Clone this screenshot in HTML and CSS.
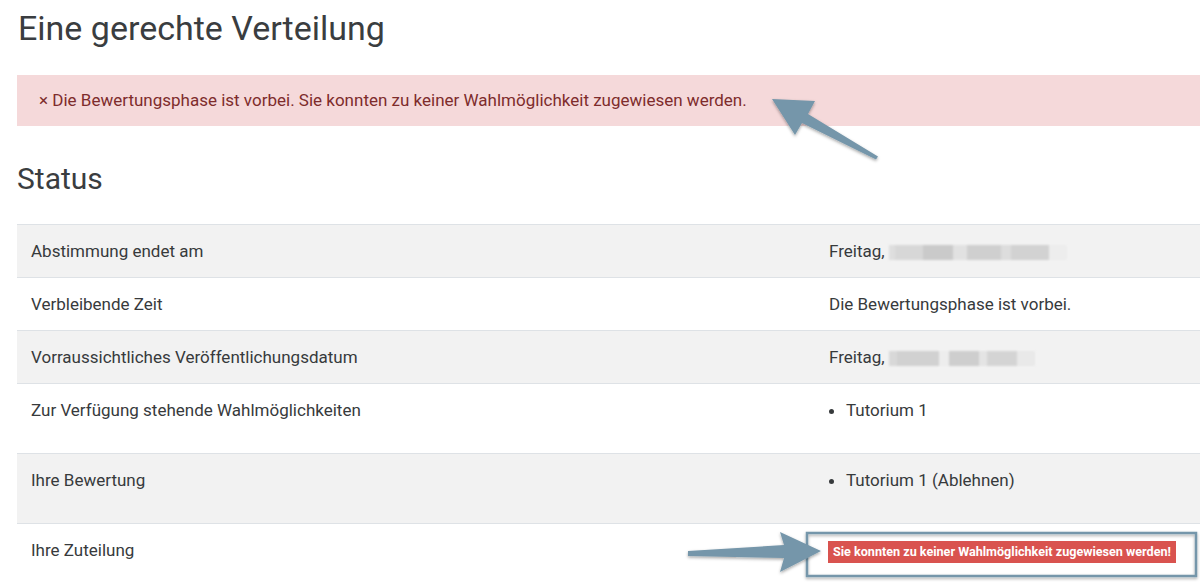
FILE: index.html
```html
<!DOCTYPE html>
<html lang="de">
<head>
<meta charset="utf-8">
<title>Eine gerechte Verteilung</title>
<link rel="stylesheet" href="styles.css">
</head>
<body>
<main class="page">
  <h2 class="title">Eine gerechte Verteilung</h2>
  <div class="alert">× Die Bewertungsphase ist vorbei. Sie konnten zu keiner Wahlmöglichkeit zugewiesen werden.</div>
  <h3 class="section">Status</h3>
  <table class="status">
    <tbody>
      <tr>
        <td class="label">Abstimmung endet am</td>
        <td class="value">Freitag, <span class="blur blur-a"><i></i><i></i><i></i><i></i><i></i><i></i><i></i><i></i></span></td>
      </tr>
      <tr>
        <td class="label">Verbleibende Zeit</td>
        <td class="value">Die Bewertungsphase ist vorbei.</td>
      </tr>
      <tr>
        <td class="label">Vorraussichtliches Veröffentlichungsdatum</td>
        <td class="value">Freitag, <span class="blur blur-b"><i></i><i></i><i></i><i></i><i></i><i></i><i></i></span></td>
      </tr>
      <tr>
        <td class="label">Zur Verfügung stehende Wahlmöglichkeiten</td>
        <td class="value"><ul class="list"><li>Tutorium 1</li></ul></td>
      </tr>
      <tr>
        <td class="label">Ihre Bewertung</td>
        <td class="value"><ul class="list"><li>Tutorium 1 (Ablehnen)</li></ul></td>
      </tr>
      <tr>
        <td class="label">Ihre Zuteilung</td>
        <td class="value"><span class="badge">Sie konnten zu keiner Wahlmöglichkeit zugewiesen werden!</span></td>
      </tr>
    </tbody>
  </table>
</main>
<svg class="annotations" width="1200" height="588" viewBox="0 0 1200 588" xmlns="http://www.w3.org/2000/svg">
  <defs>
    <filter id="sh" x="-20%" y="-20%" width="140%" height="140%">
      <feDropShadow dx="0" dy="1.5" stdDeviation="1.5" flood-color="#000" flood-opacity="0.35"/>
    </filter>
  </defs>
  <rect x="807" y="533" width="389" height="43" fill="none" stroke="#7596aa" stroke-width="2.5" filter="url(#sh)"/>
  <polygon points="772,99 815,101 808,114 878,156.5 876,159.5 802,123 795,135" fill="#7596aa" filter="url(#sh)"/>
  <polygon points="821,551 780,532 784,545 688,551 688,556 784,558 780,572" fill="#7596aa" filter="url(#sh)"/>
</svg>
</body>
</html>
```

FILE: styles.css
```css
html, body {
  margin: 0;
  padding: 0;
  background: #fff;
  overflow: hidden;
}

body {
  font-family: Roboto, "Noto Sans", sans-serif;
  color: #373a3c;
  font-size: 17px;
  line-height: 1.5;
  width: 1200px;
  height: 588px;
  position: relative;
}

.page {
  padding-left: 17px;
  width: 1200px;
}

.title {
  font-weight: 400;
  font-size: 34px;
  line-height: 40px;
  margin: 8px 0 27px 1px;
  color: #3a3d40;
}

.alert {
  background: #f5d9da;
  color: #7e2c2c;
  padding: 13px 22px 13px 22px;
  line-height: 25px;
  font-size: 17px;
}

.section {
  font-weight: 400;
  font-size: 30px;
  line-height: 36px;
  margin: 35px 0 27px 0;
  color: #3a3d40;
}

.status {
  border-collapse: collapse;
  width: 1200px;
}

.status td {
  border-top: 1px solid #dee2e6;
  padding: 13px 14px;
  line-height: 26px;
  vertical-align: top;
  font-size: 17px;
}

.status tr:nth-child(odd) td {
  background: #f2f2f2;
}

.status .label {
  width: 770px;
}

.blur {
  display: inline-flex;
  vertical-align: middle;
  height: 15px;
  filter: blur(1px);
  opacity: 0.75;
}

.blur i {
  display: block;
  height: 15px;
  background: #c9c9c9;
}

.blur-a i:nth-child(1) { width: 6px; background: #d8d8d8; }
.blur-a i:nth-child(2) { width: 28px; background: #cfcfcf; }
.blur-a i:nth-child(3) { width: 30px; background: #bdbdbd; }
.blur-a i:nth-child(4) { width: 14px; background: #dcdcdc; }
.blur-a i:nth-child(5) { width: 34px; background: #c4c4c4; }
.blur-a i:nth-child(6) { width: 10px; background: #d6d6d6; }
.blur-a i:nth-child(7) { width: 38px; background: #c8c8c8; }
.blur-a i:nth-child(8) { width: 18px; background: #ececec; }

.blur-b i:nth-child(1) { width: 8px; background: #d0d0d0; }
.blur-b i:nth-child(2) { width: 42px; background: #c6c6c6; }
.blur-b i:nth-child(3) { width: 10px; background: #ececec; }
.blur-b i:nth-child(4) { width: 30px; background: #c2c2c2; }
.blur-b i:nth-child(5) { width: 8px; background: #e0e0e0; }
.blur-b i:nth-child(6) { width: 30px; background: #cbcbcb; }
.blur-b i:nth-child(7) { width: 18px; background: #e6e6e6; }

.list {
  margin: 0 0 17px 0;
  padding-left: 17px;
}

.badge {
  display: inline-block;
  background: #d9534f;
  color: #fff;
  font-weight: 700;
  font-size: 12.6px;
  line-height: 22px;
  padding: 0 5px;
  vertical-align: middle;
  margin-left: -1px;
}

.annotations {
  position: absolute;
  left: 0;
  top: 0;
  pointer-events: none;
}
```
